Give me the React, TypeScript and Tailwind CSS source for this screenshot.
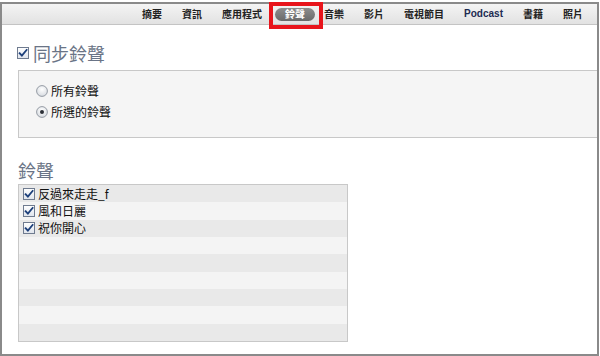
import React from 'react';

// iTunes-style "鈴聲" sync pane

const tabs = ['摘要', '資訊', '應用程式', '鈴聲', '音樂', '影片', '電視節目', 'Podcast', '書籍', '照片'];
const ringtones = ['反過來走走_f', '風和日麗', '祝你開心'];

function CheckBox() {
  return (
    <svg width="12" height="12" viewBox="0 0 12 12" className="shrink-0">
      <defs>
        <linearGradient id="cbg" x1="0" y1="0" x2="0" y2="1">
          <stop offset="0" stopColor="#ffffff" />
          <stop offset="1" stopColor="#dfe4ec" />
        </linearGradient>
      </defs>
      <rect x="0.5" y="0.5" width="11" height="11" fill="url(#cbg)" stroke="#6f7b8f" />
      <path d="M2.6 6.2 L4.9 8.6 L9.6 2.9" fill="none" stroke="#1c3f7a" strokeWidth="1.8" strokeLinecap="square" />
    </svg>
  );
}

function Radio({ checked }: { checked?: boolean }) {
  return (
    <svg width="12" height="12" viewBox="0 0 12 12" className="shrink-0">
      <defs>
        <radialGradient id="rg" cx="0.5" cy="0.35" r="0.7">
          <stop offset="0" stopColor="#ffffff" />
          <stop offset="1" stopColor="#d4d8de" />
        </radialGradient>
      </defs>
      <circle cx="6" cy="6" r="5.4" fill="url(#rg)" stroke="#8b929c" strokeWidth="0.9" />
      {checked && <circle cx="6" cy="6" r="2" fill="#2b2f36" />}
    </svg>
  );
}

export default function App() {
  const font = { fontFamily: '"Noto Sans CJK TC", "Liberation Sans", sans-serif' };

  return (
    <div className="w-[600px] h-[356px] bg-white pt-[2px] overflow-hidden" style={font}>
      <div className="relative w-[599px] h-[354px] border-2 border-[#8a8a8a] flex flex-col">
        {/* tab bar */}
        <div className="h-[21px] shrink-0 flex items-center justify-end pr-[4px] border-b border-[#c4c4c4] bg-gradient-to-b from-[#f4f4f4] to-[#e2e2e2]">
          {tabs.map((t) =>
            t === '鈴聲' ? (
              <div key={t} className="ml-[3px] mr-[-1px] h-[13px] w-[40px] rounded-full bg-gradient-to-b from-[#8d8d8d] to-[#6a6a6a] flex items-center justify-center">
                <span className="text-[10px] leading-none font-bold text-white">{t}</span>
              </div>
            ) : (
              <span
                key={t}
                className={
                  'px-[10px] text-[10px] leading-none font-bold ' +
                  (t === 'Podcast' ? 'text-[#1d2b52]' : 'text-[#222]')
                }
                style={t === 'Podcast' ? { fontFamily: '"Liberation Sans", sans-serif' } : undefined}
              >
                {t}
              </span>
            )
          )}
        </div>

        {/* red highlight around the selected tab */}
        <div className="absolute left-[267px] top-[-2px] w-[54px] h-[27px] border-[4px] border-[#e8141b]" />

        {/* sync section */}
        <div className="pl-[15px] pt-[16px] flex items-center gap-[4px]">
          <CheckBox />
          <span className="text-[18px] leading-[24px] text-[#6a7486]">同步鈴聲</span>
        </div>
        <div className="ml-[16px] mt-[5px] h-[68px] shrink-0 bg-[#f5f5f5] border border-[#c8c8c8] border-r-0 flex flex-col pl-[17px] pt-[13px] gap-[8px]">
          <label className="flex items-center gap-[3px] text-[12px] leading-[13px] text-[#111]">
            <Radio />
            所有鈴聲
          </label>
          <label className="flex items-center gap-[3px] text-[12px] leading-[13px] text-[#111]">
            <Radio checked />
            所選的鈴聲
          </label>
        </div>

        {/* ringtone list */}
        <div className="pl-[16px] pt-[20px] text-[18px] leading-[24px] text-[#6a7486]">鈴聲</div>
        <div className="ml-[16px] mt-[2px] w-[330px] h-[158px] shrink-0 border border-[#c8c8c8] grid grid-rows-9">
          {Array.from({ length: 9 }).map((_, i) => (
            <div
              key={i}
              className={'flex items-center gap-[3px] pl-[4px] ' + (i % 2 === 0 ? 'bg-[#e9e9e9]' : 'bg-[#f4f4f4]')}
            >
              {ringtones[i] && (
                <>
                  <CheckBox />
                  <span className="text-[12px] leading-none text-[#111]">{ringtones[i]}</span>
                </>
              )}
            </div>
          ))}
        </div>
      </div>
    </div>
  );
}
